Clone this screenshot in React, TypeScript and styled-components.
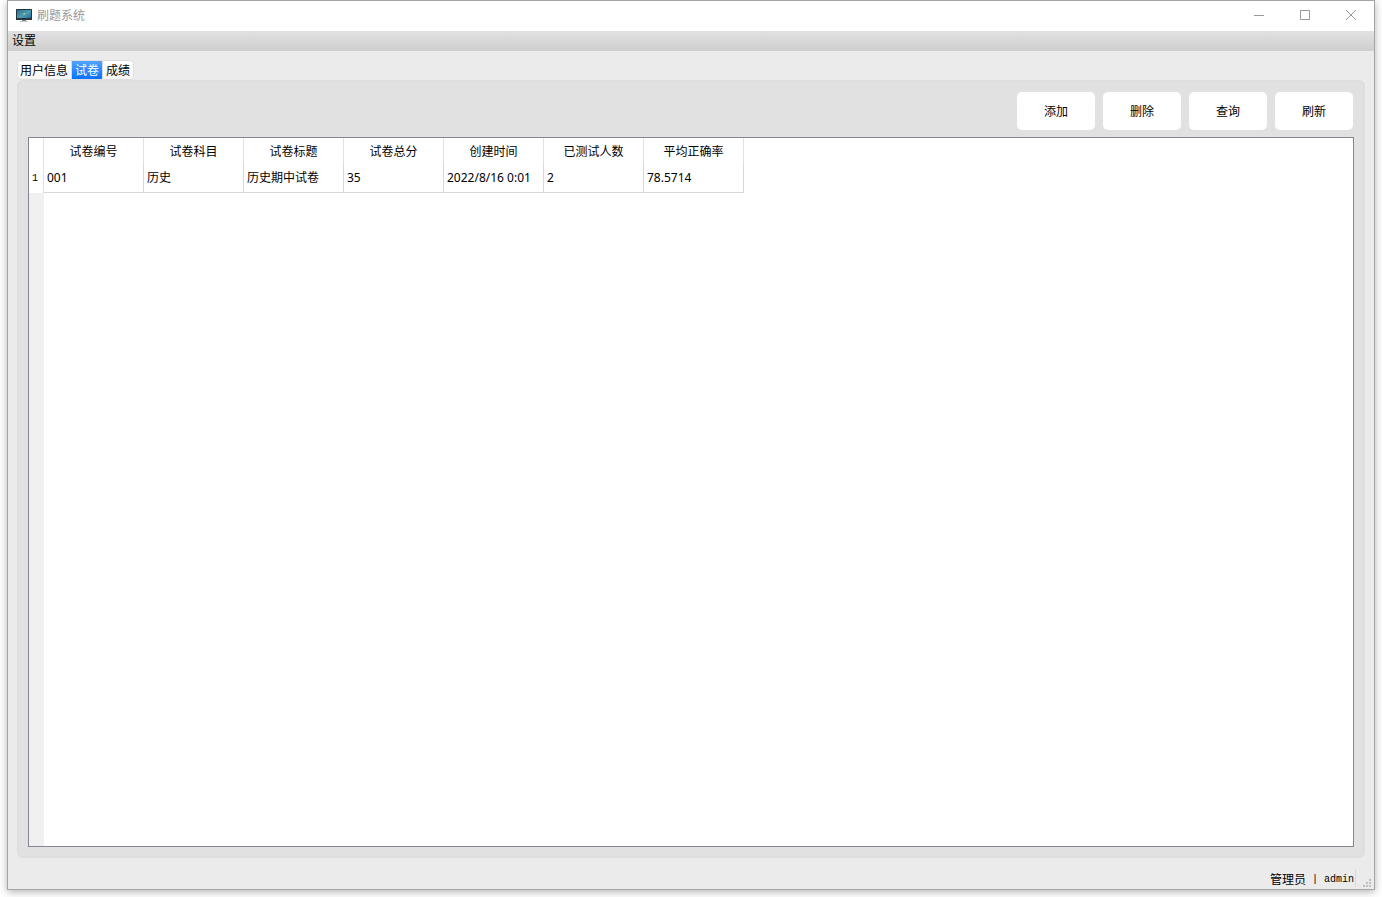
import React, { useState } from "react";
import styled, { createGlobalStyle } from "styled-components";

const GlobalStyle = createGlobalStyle`
  * { box-sizing: border-box; }
  body {
    margin: 0;
    background: #fff;
    color: #000;
    font: 12px/18px "Noto Sans CJK SC", sans-serif;
  }
  button { font: inherit; color: inherit; margin: 0; padding: 0; border: 0; }
`;

const Desktop = styled.div`
  display: flex;
  min-height: 100vh;
  padding: 0 7px 7px;
`;

const Window = styled.div`
  display: flex;
  flex-direction: column;
  flex: 1;
  min-width: 0;
  border: 1px solid #a5a5a5;
  background: #ebebeb;
  box-shadow: 0 2px 8px rgba(0, 0, 0, 0.3);
`;

const TitleBar = styled.header`
  display: flex;
  align-items: center;
  height: 30px;
  padding: 0 0 2px 8px;
  background: #fff;
  color: #999;
`;

const Title = styled.h1`
  flex: 1;
  margin: 0 0 0 5px;
  font-size: 12px;
  font-weight: 400;
`;

const CaptionButton = styled.button`
  display: flex;
  align-items: center;
  justify-content: center;
  width: 46px;
  height: 28px;
  background: none;
`;

const MenuBar = styled.nav`
  display: flex;
  height: 20px;
  padding: 0 4px 2px;
  background: linear-gradient(#e1e1e1, #cdcfcd);
`;

const MenuButton = styled.button`
  background: none;
`;

const Content = styled.main`
  display: flex;
  flex-direction: column;
  flex: 1;
  padding: 9px 9px 0;
`;

const TabList = styled.div`
  display: flex;
  align-self: flex-start;
  height: 20px;
  border: 1px solid #dedede;
  border-radius: 4px;
  overflow: hidden;
`;

const Tab = styled.button<{ $selected: boolean }>`
  padding: 0 3px 0 2px;
  line-height: 18px;
  color: ${(p) => (p.$selected ? "#fff" : "#000")};
  background: ${(p) =>
    p.$selected ? "linear-gradient(#50a4ff, #0a72ff)" : "linear-gradient(#fff, #f6f6f6)"};

  & + & {
    padding-left: 3px;
  }

  &:not(:last-child) {
    border-right: 1px solid #d4dbe4;
  }
`;

const Panel = styled.section`
  display: flex;
  flex-direction: column;
  flex: 1;
  padding: 10px 9px 9px;
  border: 2px solid #dedede;
  border-radius: 6px;
  background: #e1e1e1;
`;

const Toolbar = styled.div`
  display: flex;
  justify-content: flex-end;
  gap: 8px;
  padding: 0 1px 7px 0;
`;

const ToolButton = styled.button`
  width: 78px;
  height: 38px;
  border-radius: 5px;
  background: #fff;
`;

const TableView = styled.div`
  display: flex;
  flex-direction: column;
  flex: 1;
  border: 1px solid #828790;
  background: #fff;
`;

const Grid = styled.table`
  align-self: flex-start;
  width: 715px;
  table-layout: fixed;
  border-collapse: separate;
  border-spacing: 0;
`;

const IndexCol = styled.col`
  width: 15px;
`;

const HeadCell = styled.th`
  height: 25px;
  padding: 0;
  border-right: 1px solid #e2e2e2;
  font-weight: 400;
`;

const IndexCell = styled.th`
  padding: 2px 2px 0 0;
  border-right: 1px solid #e2e2e2;
  font: 400 10px/18px "Liberation Mono", monospace;
`;

const Cell = styled.td`
  height: 30px;
  padding: 0 3px;
  border-right: 1px solid #d8d8d8;
  border-bottom: 1px solid #d8d8d8;
  font-family: "Noto Sans", "Noto Sans CJK SC", sans-serif;
  white-space: nowrap;
`;

const Gutter = styled.div`
  flex: 1;
  width: 15px;
  background: #f0f0f0;
`;

const StatusBar = styled.footer`
  display: flex;
  justify-content: flex-end;
  height: 31px;
  padding: 11px 3px 2px 0;
`;

const StatusText = styled.div`
  display: flex;
  padding-right: 1px;
  border-right: 1px solid #d8d8d8;
  line-height: 20px;
`;

const Mono = styled.span`
  font: 10px/22px "Liberation Mono", monospace;
  white-space: pre;
`;

const Grip = styled.svg`
  align-self: flex-end;
  margin-left: 7px;
`;

const MonitorIcon = () => (
  <svg width="16" height="14" viewBox="0 0 16 14" aria-hidden="true">
    <defs>
      <linearGradient id="screen" x1="0" y1="0" x2="1" y2="1">
        <stop offset="0" stopColor="#2e6f91" />
        <stop offset="0.55" stopColor="#4d9db5" />
        <stop offset="1" stopColor="#27688a" />
      </linearGradient>
    </defs>
    <rect y="1" width="16" height="11" rx="0.5" fill="#26343c" />
    <rect x="1" y="2" width="14" height="8" fill="url(#screen)" />
    <path d="M7 5h2v2H7z" fill="#7fb394" />
    <path d="M8 5h1v1H8z" fill="#e5cf67" />
    <path d="M6 12h4v1H6z" fill="#858b8e" />
    <path d="M4 13h8v1H4z" fill="#c3c6c8" />
  </svg>
);

const captions: { label: string; shape: React.ReactNode }[] = [
  { label: "最小化", shape: <path d="M1 5.5h10" /> },
  { label: "最大化", shape: <path d="M1.5 0.5h9v9h-9z" /> },
  { label: "关闭", shape: <path d="M1 0l10 10M11 0L1 10" /> },
];
const tabs = ["用户信息", "试卷", "成绩"];
const actions = ["添加", "删除", "查询", "刷新"];
const columns = ["试卷编号", "试卷科目", "试卷标题", "试卷总分", "创建时间", "已测试人数", "平均正确率"];
const rows = [["001", "历史", "历史期中试卷", "35", "2022/8/16 0:01", "2", "78.5714"]];

export default function App() {
  const [active, setActive] = useState(1);
  return (
    <Desktop>
      <GlobalStyle />
      <Window>
        <TitleBar>
          <MonitorIcon />
          <Title>刷题系统</Title>
          {captions.map((c) => (
            <CaptionButton key={c.label} aria-label={c.label}>
              <svg width="12" height="10" viewBox="0 0 12 10" fill="none" stroke="#999">
                {c.shape}
              </svg>
            </CaptionButton>
          ))}
        </TitleBar>
        <MenuBar>
          <MenuButton>设置</MenuButton>
        </MenuBar>
        <Content>
          <TabList role="tablist">
            {tabs.map((name, i) => (
              <Tab
                key={name}
                role="tab"
                aria-selected={i === active}
                $selected={i === active}
                onClick={() => setActive(i)}
              >
                {name}
              </Tab>
            ))}
          </TabList>
          <Panel role="tabpanel" aria-label={tabs[active]}>
            <Toolbar>
              {actions.map((name) => (
                <ToolButton key={name}>{name}</ToolButton>
              ))}
            </Toolbar>
            <TableView>
              <Grid>
                <colgroup>
                  <IndexCol />
                  {columns.map((name) => (
                    <col key={name} />
                  ))}
                </colgroup>
                <thead>
                  <tr>
                    <HeadCell as="td" />
                    {columns.map((name) => (
                      <HeadCell key={name} scope="col">
                        {name}
                      </HeadCell>
                    ))}
                  </tr>
                </thead>
                <tbody>
                  {rows.map((row, i) => (
                    <tr key={row[0]}>
                      <IndexCell scope="row">{i + 1}</IndexCell>
                      {row.map((value, j) => (
                        <Cell key={columns[j]}>{value}</Cell>
                      ))}
                    </tr>
                  ))}
                </tbody>
              </Grid>
              <Gutter />
            </TableView>
          </Panel>
        </Content>
        <StatusBar>
          <StatusText>
            管理员<Mono> | admin</Mono>
          </StatusText>
          <Grip width="8" height="8" viewBox="0 0 8 8" fill="#bfbfbf" aria-hidden="true">
            <path d="M6 0h2v2H6zM3 3h2v2H3zM6 3h2v2H6zM0 6h2v2H0zM3 6h2v2H3zM6 6h2v2H6z" />
          </Grip>
        </StatusBar>
      </Window>
    </Desktop>
  );
}
